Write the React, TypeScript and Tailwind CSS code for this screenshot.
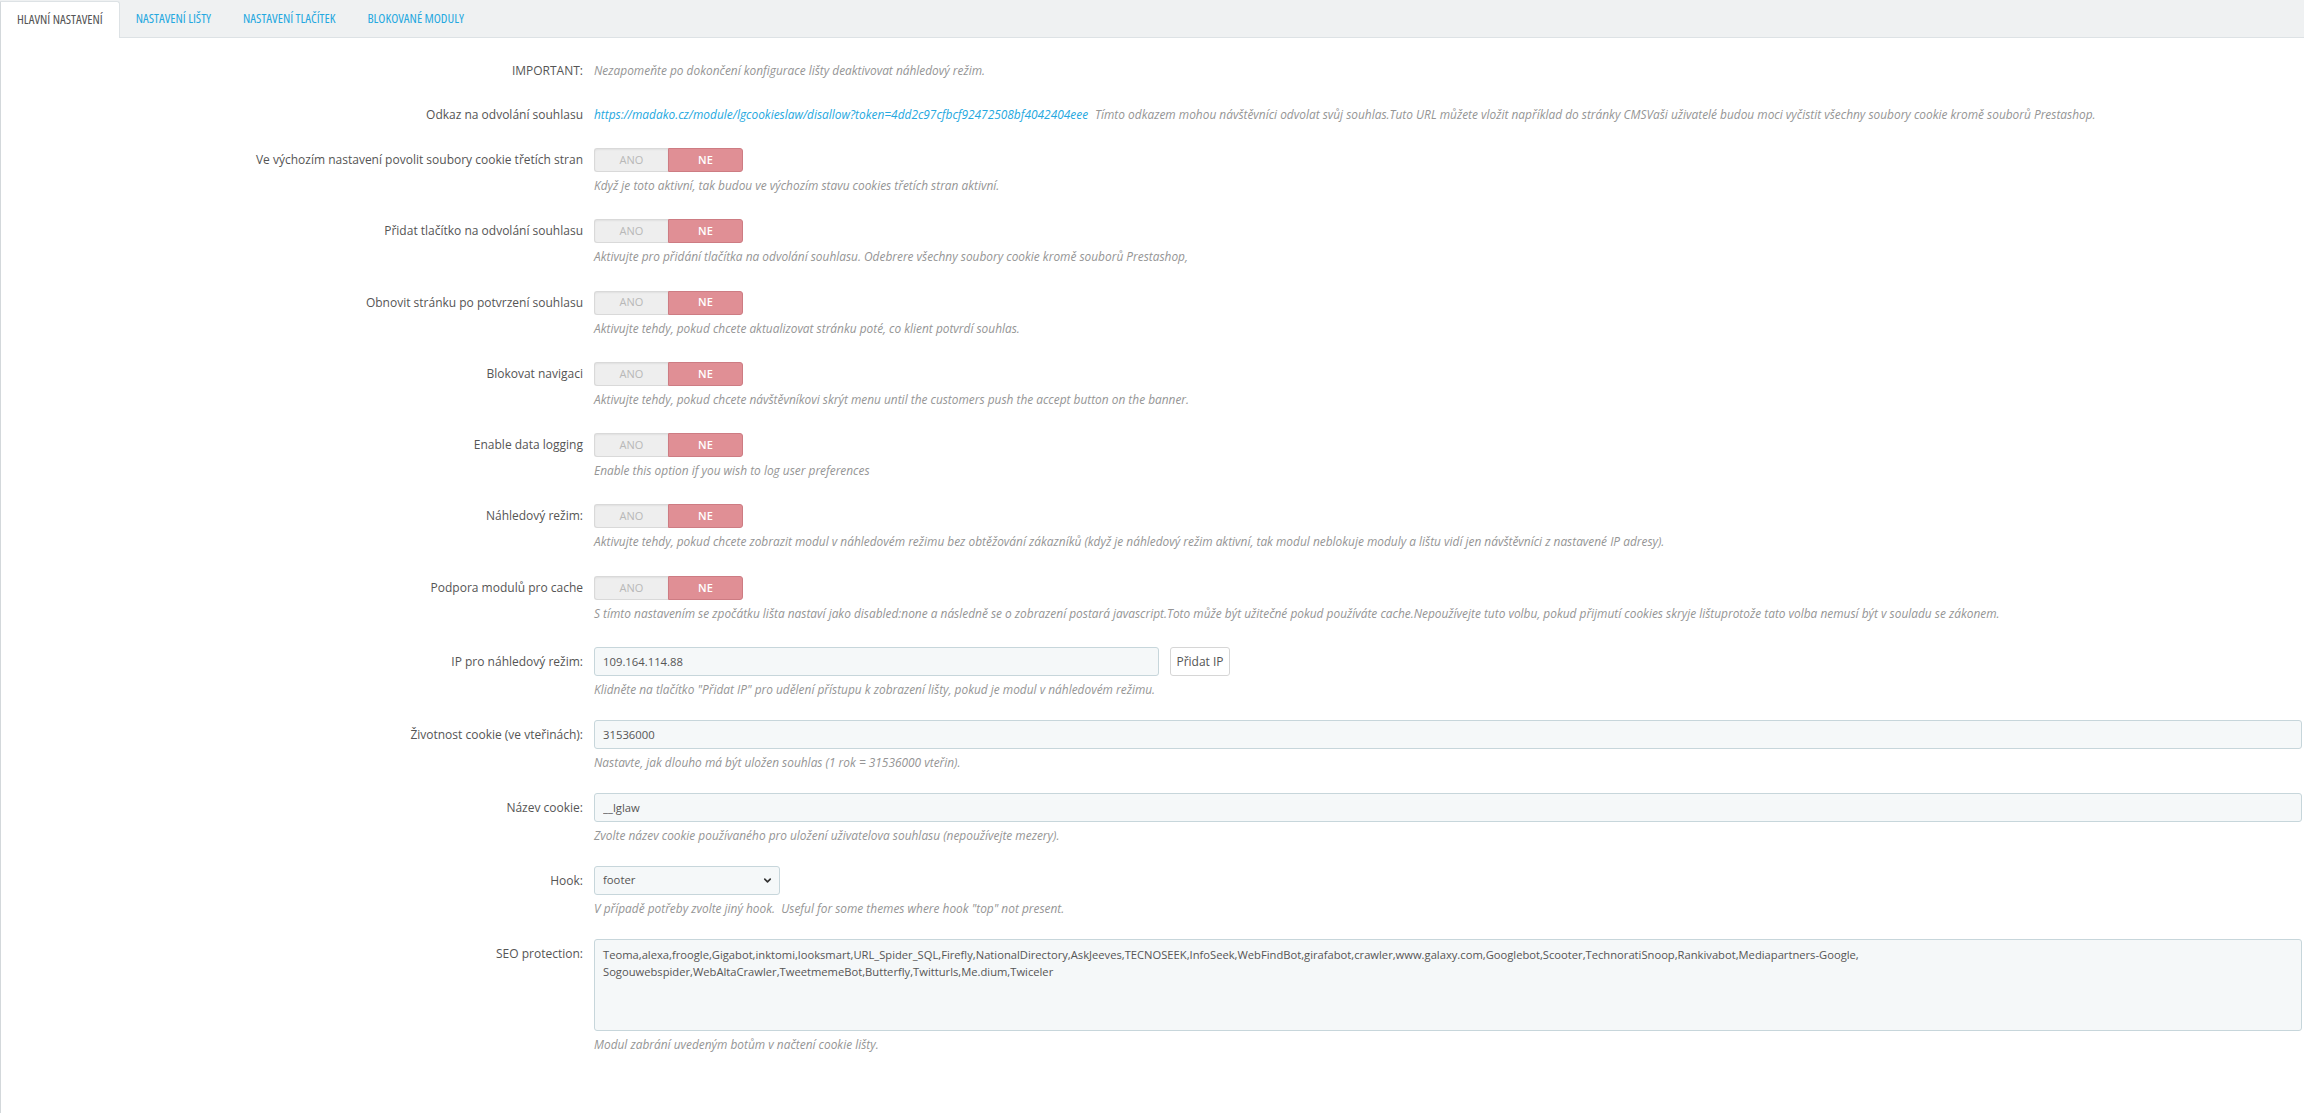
import type { ReactNode } from 'react'
import { ChevronDown } from 'lucide-react'

const tabs = ['Hlavní nastavení', 'Nastavení lišty', 'Nastavení tlačítek', 'Blokované moduly']

const switches = [
  {
    label: 'Ve výchozím nastavení povolit soubory cookie třetích stran',
    hint: 'Když je toto aktivní, tak budou ve výchozím stavu cookies třetích stran aktivní.',
  },
  {
    label: 'Přidat tlačítko na odvolání souhlasu',
    hint: 'Aktivujte pro přidání tlačítka na odvolání souhlasu. Odebrere všechny soubory cookie kromě souborů Prestashop,',
  },
  {
    label: 'Obnovit stránku po potvrzení souhlasu',
    hint: 'Aktivujte tehdy, pokud chcete aktualizovat stránku poté, co klient potvrdí souhlas.',
  },
  {
    label: 'Blokovat navigaci',
    hint: 'Aktivujte tehdy, pokud chcete návštěvníkovi skrýt menu until the customers push the accept button on the banner.',
  },
  {
    label: 'Enable data logging',
    hint: 'Enable this option if you wish to log user preferences',
  },
  {
    label: 'Náhledový režim:',
    hint: 'Aktivujte tehdy, pokud chcete zobrazit modul v náhledovém režimu bez obtěžování zákazníků (když je náhledový režim aktivní, tak modul neblokuje moduly a lištu vidí jen návštěvníci z nastavené IP adresy).',
  },
  {
    label: 'Podpora modulů pro cache',
    hint: 'S tímto nastavením se zpočátku lišta nastaví jako disabled:none a následně se o zobrazení postará javascript.Toto může být užitečné pokud používáte cache.Nepoužívejte tuto volbu, pokud přijmutí cookies skryje lištuprotože tato volba nemusí být v souladu se zákonem.',
  },
]

const bots =
  'Teoma,alexa,froogle,Gigabot,inktomi,looksmart,URL_Spider_SQL,Firefly,NationalDirectory,AskJeeves,TECNOSEEK,InfoSeek,WebFindBot,girafabot,crawler,www.galaxy.com,Googlebot,Scooter,TechnoratiSnoop,Rankivabot,Mediapartners-Google,\nSogouwebspider,WebAltaCrawler,TweetmemeBot,Butterfly,Twitturls,Me.dium,Twiceler'

function Hint({ children }: { children: ReactNode }) {
  return <p className="mt-[5px] text-[11.9px] italic leading-[17px] text-[#959595]">{children}</p>
}

/** Řádek formuláře: popisek zarovnaný doprava + ovládací prvek. */
function Row({
  label,
  lh,
  hint,
  className,
  children,
}: {
  label: string
  lh: string
  hint?: string
  className?: string
  children: ReactNode
}) {
  return (
    <div className={`flex items-start ${className ?? ''}`}>
      <label className={`w-[582px] shrink-0 text-right text-[12px] text-[#555] ${lh}`}>{label}</label>
      <div className="ml-[11px] min-w-0 flex-1 pr-[2px]">
        {children}
        {hint && <Hint>{hint}</Hint>}
      </div>
    </div>
  )
}

function Switch() {
  return (
    <div className="flex h-[24px] w-[149px] text-[11px]">
      <span className="flex flex-1 items-center justify-center rounded-l-[3px] border border-r-0 border-[#d9d9d9] bg-[#eeeeee] text-[#b8b8b8] shadow-[inset_0_1px_2px_rgba(0,0,0,0.06)]">
        ANO
      </span>
      <span className="flex flex-1 items-center justify-center rounded-r-[3px] border border-[#cd7c83] bg-[#e08f95] font-semibold text-white">
        NE
      </span>
    </div>
  )
}

const inputCls =
  'h-[29px] rounded-[3px] border border-[#c7d6db] bg-[#f5f8f9] px-2 text-[11.3px] text-[#555] outline-none'

export default function App() {
  return (
    <div className="flex min-h-screen flex-col bg-white font-['Open_Sans',sans-serif] text-[#555]">
      {/* záložky */}
      <div className="flex h-[38px] shrink-0 items-end border-b border-[#dde2e5] bg-[#eff1f2]">
        {tabs.map((t, i) => (
          <div
            key={t}
            className={
              i === 0
                ? '-mb-px flex h-[37px] items-center rounded-tr-[3px] border border-b-0 border-l-[#d3d8db] border-[#dde2e5] bg-white px-4 pb-px text-[13px] uppercase text-[#555] [font-stretch:75%]'
                : 'flex h-[36px] items-center px-4 text-[13px] uppercase text-[#25a8e0] [font-stretch:75%]'
            }
          >
            {t}
          </div>
        ))}
      </div>

      {/* panel */}
      <div className="flex-1 border-l border-[#d3d8db] pt-[24px]">
        <Row label="IMPORTANT:" lh="leading-[17px]" className="mb-[27px]">
          <p className="text-[11.9px] italic leading-[17px] text-[#959595]">
            Nezapomeňte po dokončení konfigurace lišty deaktivovat náhledový režim.
          </p>
        </Row>

        <Row label="Odkaz na odvolání souhlasu" lh="leading-[17px]" className="mb-[25px]">
          <p className="whitespace-nowrap text-[11.9px] italic leading-[17px] text-[#959595]">
            <a className="text-[#25a8e0]" href="#">
              https://madako.cz/module/lgcookieslaw/disallow?token=4dd2c97cfbcf92472508bf4042404eee
            </a>
            <span className="ml-[7px]">
              Tímto odkazem mohou návštěvníci odvolat svůj souhlas.Tuto URL můžete vložit například do stránky CMSVaši
              uživatelé budou moci vyčistit všechny soubory cookie kromě souborů Prestashop.
            </span>
          </p>
        </Row>

        {switches.map((s) => (
          <Row key={s.label} label={s.label} lh="leading-[24px]" hint={s.hint} className="mb-[25.3px]">
            <Switch />
          </Row>
        ))}

        <Row
          label="IP pro náhledový režim:"
          lh="leading-[29px]"
          className="mb-[22px]"
          hint={'Klidněte na tlačítko "Přidat IP" pro udělení přístupu k zobrazení lišty, pokud je modul v náhledovém režimu.'}
        >
          <div className="flex items-center gap-[11px]">
            <input className={`${inputCls} w-[565px]`} defaultValue="109.164.114.88" />
            <button
              type="button"
              className="h-[29px] w-[60px] rounded-[3px] border border-[#d6d6d6] bg-white text-[12px] text-[#555]"
            >
              Přidat IP
            </button>
          </div>
        </Row>

        <Row
          label="Životnost cookie (ve vteřinách):"
          lh="leading-[29px]"
          className="mb-[22px]"
          hint="Nastavte, jak dlouho má být uložen souhlas (1 rok = 31536000 vteřin)."
        >
          <input className={`${inputCls} w-full`} defaultValue="31536000" />
        </Row>

        <Row
          label="Název cookie:"
          lh="leading-[29px]"
          className="mb-[22px]"
          hint="Zvolte název cookie používaného pro uložení uživatelova souhlasu (nepoužívejte mezery)."
        >
          <input className={`${inputCls} w-full`} defaultValue="__lglaw" />
        </Row>

        <Row
          label="Hook:"
          lh="leading-[29px]"
          className="mb-[22px]"
          hint={'V případě potřeby zvolte jiný hook.\u00a0 Useful for some themes where hook "top" not present.'}
        >
          <div className="relative w-[186px]">
            <select className={`${inputCls} w-full appearance-none`} defaultValue="footer">
              <option value="footer">footer</option>
              <option value="top">top</option>
            </select>
            <ChevronDown
              className="pointer-events-none absolute right-[7px] top-[9px] h-[11px] w-[11px] text-[#333]"
              strokeWidth={3.5}
            />
          </div>
        </Row>

        <Row label="SEO protection:" lh="leading-[29px]" hint="Modul zabrání uvedeným botům v načtení cookie lišty.">
          <textarea
            className="block h-[92px] w-full resize-none rounded-[3px] border border-[#c7d6db] bg-[#f5f8f9] px-2 py-[6px] text-[11.2px] leading-[17px] text-[#555] outline-none"
            defaultValue={bots}
          />
        </Row>
      </div>
    </div>
  )
}
